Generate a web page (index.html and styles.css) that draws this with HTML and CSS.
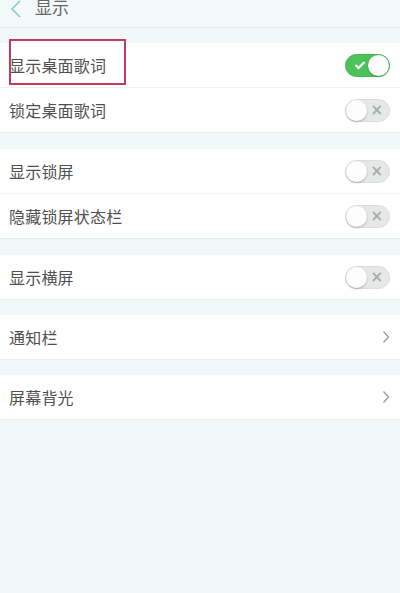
FILE: index.html
```html
<!DOCTYPE html>
<html lang="zh">
<head>
<meta charset="utf-8">
<link rel="stylesheet" href="styles.css">
</head>
<body>
<div class="page">
  <div class="header">
    <svg class="back" width="14" height="20" viewBox="0 0 14 20"><path d="M11 2 L3 10 L11 18" fill="none" stroke="#86cccc" stroke-width="1.6"/></svg>
    <span class="title">显示</span>
  </div>
  <div class="group g1">
    <div class="row">
      <span class="label">显示桌面歌词</span>
      <span class="toggle on"><span class="knob"></span><svg class="check" width="12" height="10" viewBox="0 0 12 10"><path d="M1.5 5 L4.5 8 L10.5 2" fill="none" stroke="#fff" stroke-width="2.2"/></svg></span>
      <span class="highlight"></span>
    </div>
    <div class="row">
      <span class="label">锁定桌面歌词</span>
      <span class="toggle"><span class="knob"></span><span class="x">×</span></span>
    </div>
  </div>
  <div class="group g2">
    <div class="row">
      <span class="label">显示锁屏</span>
      <span class="toggle"><span class="knob"></span><span class="x">×</span></span>
    </div>
    <div class="row">
      <span class="label">隐藏锁屏状态栏</span>
      <span class="toggle"><span class="knob"></span><span class="x">×</span></span>
    </div>
  </div>
  <div class="group g3">
    <div class="row">
      <span class="label">显示横屏</span>
      <span class="toggle"><span class="knob"></span><span class="x">×</span></span>
    </div>
  </div>
  <div class="group g4">
    <div class="row">
      <span class="label">通知栏</span>
      <svg class="chev" width="8" height="14" viewBox="0 0 8 14"><path d="M1.5 1.5 L6.5 7 L1.5 12.5" fill="none" stroke="#999" stroke-width="1.3"/></svg>
    </div>
  </div>
  <div class="group g5">
    <div class="row">
      <span class="label">屏幕背光</span>
      <svg class="chev" width="8" height="14" viewBox="0 0 8 14"><path d="M1.5 1.5 L6.5 7 L1.5 12.5" fill="none" stroke="#999" stroke-width="1.3"/></svg>
    </div>
  </div>
</div>
</body>
</html>
```

FILE: styles.css
```css
html, body {
  margin: 0;
  padding: 0;
}
body {
  background: #f2f8f8;
  font-family: "Noto Sans CJK SC", "Noto Sans", sans-serif;
}
.page {
  width: 400px;
  height: 593px;
  background: #f2f8f8;
  display: flex;
  flex-direction: column;
  overflow: hidden;
}
.header {
  height: 27px;
  border-bottom: 1px solid #e2e9e9;
  display: flex;
  align-items: flex-start;
  background: #f4f9f9;
}
.back {
  margin-left: 9px;
  margin-top: -1px;
}
.title {
  margin-left: 12px;
  margin-top: -5px;
  font-size: 17px;
  line-height: 24px;
  color: #666;
}
.group {
  background: #fff;
  border-bottom: 1px solid #e8efef;
}
.g1 { margin-top: 15px; }
.g2 { margin-top: 16px; }
.g3 { margin-top: 16px; }
.g4 { margin-top: 15px; }
.g5 { margin-top: 15px; }
.row {
  position: relative;
  height: 44px;
  display: flex;
  align-items: center;
  justify-content: space-between;
  padding: 0 9px 0 9px;
}
.row + .row {
  border-top: 1px solid #eef3f3;
}
.label {
  font-size: 16px;
  color: #505050;
  letter-spacing: 0.2px;
}
.toggle {
  position: relative;
  width: 45px;
  height: 23px;
  border-radius: 12px;
  background: #e6e8e8;
  border: 1px solid #dcdede;
  box-sizing: border-box;
  margin-right: 1px;
}
.toggle .knob {
  position: absolute;
  left: 0;
  top: 0;
  width: 21px;
  height: 21px;
  border-radius: 50%;
  background: #fdfdfd;
  box-shadow: 0 1px 2px rgba(0,0,0,0.25);
}
.toggle .x {
  position: absolute;
  right: 6px;
  top: 0;
  font-family: "DejaVu Sans", sans-serif;
  font-size: 15px;
  line-height: 20px;
  color: #a8abab;
  font-weight: bold;
}
.toggle.on {
  background: #4bc35a;
  border-color: #45b853;
}
.toggle.on .knob {
  left: auto;
  right: 0;
}
.toggle.on .check {
  position: absolute;
  left: 8px;
  top: 5px;
}
.chev {
  margin-right: 1px;
}
.highlight {
  position: absolute;
  left: 9px;
  top: -4px;
  width: 117px;
  height: 46px;
  border: 2px solid #c43b62;
  box-sizing: border-box;
}
```
